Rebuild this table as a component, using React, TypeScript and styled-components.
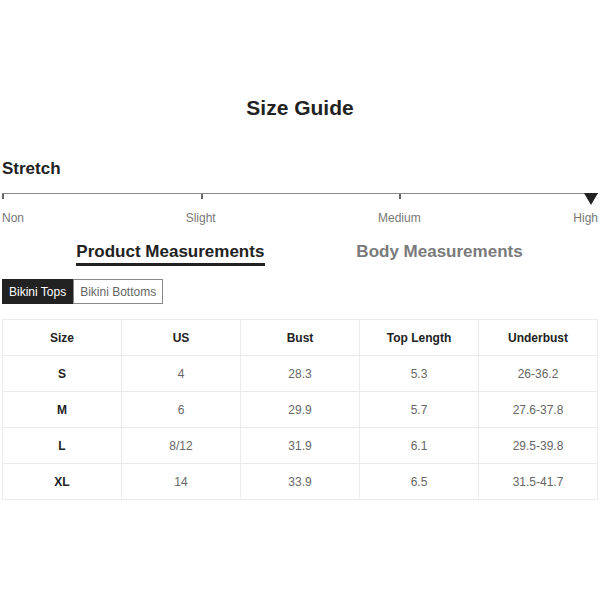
import React from "react";
import styled, { createGlobalStyle } from "styled-components";

const GlobalStyle = createGlobalStyle`
  html, body { margin: 0; padding: 0; background: #fff; }
  body { font-family: "Liberation Sans", Arial, sans-serif; color: #222; }
`;

const Page = styled.div`
  width: 600px;
  padding: 0 2px;
  box-sizing: border-box;
  display: flex;
  flex-direction: column;
`;

const Title = styled.h1`
  margin: 96px 0 0;
  font-size: 21px;
  line-height: 24px;
  font-weight: 700;
  text-align: center;
  color: #222;
`;

const SectionHeading = styled.h2`
  margin: 39px 0 0;
  font-size: 17px;
  line-height: 20px;
  font-weight: 700;
  color: #222;
`;

const Track = styled.div`
  position: relative;
  margin-top: 14px;
  display: grid;
  grid-template-columns: repeat(3, 1fr);
  border-top: 1px solid #8a8a8a;
`;

const Segment = styled.div<{ $tick: boolean }>`
  height: 5px;
  border-left: 2px solid ${(p) => (p.$tick ? "#666" : "transparent")};
  box-sizing: border-box;
`;

const Marker = styled.div`
  position: absolute;
  right: 0;
  top: -1px;
  width: 0;
  height: 0;
  border-left: 7px solid transparent;
  border-right: 7px solid transparent;
  border-top: 12px solid #222;
`;

const Labels = styled.div`
  margin-top: 12px;
  display: grid;
  grid-template-columns: repeat(3, 1fr);
  font-size: 12px;
  line-height: 14px;
  color: #777;
`;

const LabelCell = styled.div`
  display: flex;
  justify-content: space-between;
`;

const Label = styled.span<{ $centered?: boolean }>`
  transform: ${(p) => (p.$centered ? "translateX(-50%)" : "none")};
`;

const Tabs = styled.div`
  margin-top: 17px;
  display: flex;
  justify-content: center;
  gap: 91px;
`;

const Tab = styled.div<{ $active?: boolean }>`
  font-size: 17px;
  line-height: 20px;
  font-weight: 700;
  color: ${(p) => (p.$active ? "#222" : "#7a7a7a")};
  padding: 0 1px 1px 0;
  border-bottom: 3px solid ${(p) => (p.$active ? "#222" : "transparent")};
`;

const Toggle = styled.div`
  margin-top: 13px;
  display: flex;
`;

const ToggleButton = styled.button<{ $active?: boolean }>`
  height: 25px;
  padding: 0 6px;
  box-sizing: border-box;
  font-family: "Liberation Sans", Arial, sans-serif;
  font-size: 12px;
  border: 1px solid ${(p) => (p.$active ? "#222" : "#888")};
  background: ${(p) => (p.$active ? "#222" : "#fff")};
  color: ${(p) => (p.$active ? "#fff" : "#666")};
  cursor: pointer;
`;

const Table = styled.table`
  margin-top: 15px;
  width: 596px;
  border-collapse: collapse;
  table-layout: fixed;
  font-size: 12px;
`;

const Cell = styled.td<{ $strong?: boolean }>`
  height: 35px;
  padding: 0;
  border: 1px solid #ebebeb;
  text-align: center;
  font-weight: ${(p) => (p.$strong ? 700 : 400)};
  color: ${(p) => (p.$strong ? "#222" : "#666")};
`;

const headers = ["Size", "US", "Bust", "Top Length", "Underbust"];
const rows = [
  ["S", "4", "28.3", "5.3", "26-36.2"],
  ["M", "6", "29.9", "5.7", "27.6-37.8"],
  ["L", "8/12", "31.9", "6.1", "29.5-39.8"],
  ["XL", "14", "33.9", "6.5", "31.5-41.7"],
];

export default function App() {
  return (
    <>
      <GlobalStyle />
      <Page>
        <Title>Size Guide</Title>
        <SectionHeading>Stretch</SectionHeading>
        <Track>
          <Segment $tick />
          <Segment $tick />
          <Segment $tick />
          <Marker />
        </Track>
        <Labels>
          <LabelCell>
            <Label>Non</Label>
          </LabelCell>
          <LabelCell>
            <Label $centered>Slight</Label>
          </LabelCell>
          <LabelCell>
            <Label $centered>Medium</Label>
            <Label>High</Label>
          </LabelCell>
        </Labels>
        <Tabs>
          <Tab $active>Product Measurements</Tab>
          <Tab>Body Measurements</Tab>
        </Tabs>
        <Toggle>
          <ToggleButton $active>Bikini Tops</ToggleButton>
          <ToggleButton>Bikini Bottoms</ToggleButton>
        </Toggle>
        <Table>
          <thead>
            <tr>
              {headers.map((h) => (
                <Cell as="th" key={h} $strong>
                  {h}
                </Cell>
              ))}
            </tr>
          </thead>
          <tbody>
            {rows.map((r) => (
              <tr key={r[0]}>
                {r.map((v, i) => (
                  <Cell key={i} $strong={i === 0}>
                    {v}
                  </Cell>
                ))}
              </tr>
            ))}
          </tbody>
        </Table>
      </Page>
    </>
  );
}
